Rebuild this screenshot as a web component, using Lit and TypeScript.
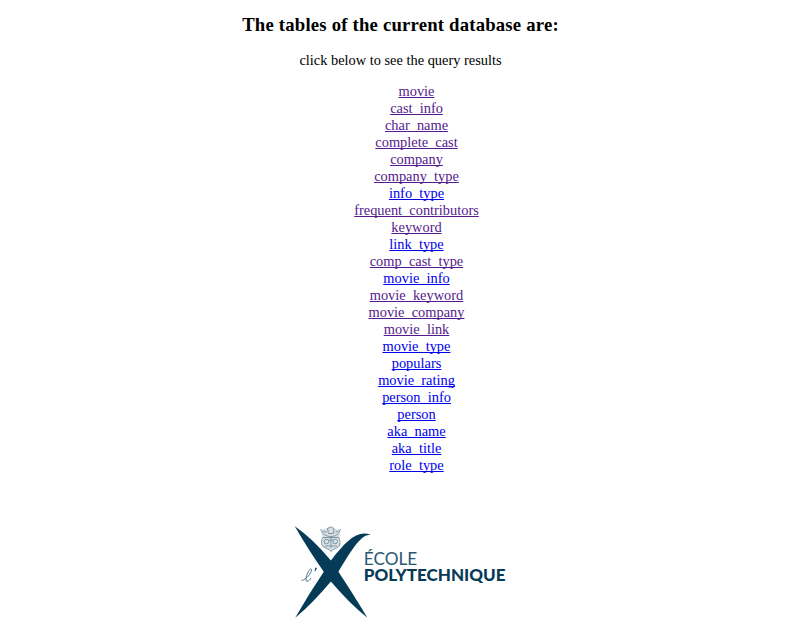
import { LitElement, html, css, svg } from "lit";
import { customElement } from "lit/decorators.js";
import { classMap } from "lit/directives/class-map.js";

interface TableLink {
  name: string;
  visited: boolean;
}

const seen = (name: string): TableLink => ({ name, visited: true });
const fresh = (name: string): TableLink => ({ name, visited: false });

const TABLES: TableLink[] = [
  seen("movie"),
  seen("cast_info"),
  seen("char_name"),
  seen("complete_cast"),
  seen("company"),
  seen("company_type"),
  fresh("info_type"),
  seen("frequent_contributors"),
  seen("keyword"),
  fresh("link_type"),
  seen("comp_cast_type"),
  fresh("movie_info"),
  seen("movie_keyword"),
  seen("movie_company"),
  seen("movie_link"),
  fresh("movie_type"),
  fresh("populars"),
  fresh("movie_rating"),
  fresh("person_info"),
  fresh("person"),
  fresh("aka_name"),
  fresh("aka_title"),
  fresh("role_type"),
];

@customElement("school-logo")
export class SchoolLogo extends LitElement {
  static styles = css`
    :host {
      display: block;
    }
    svg {
      display: block;
    }
    .ink {
      fill: #063b58;
    }
    .line {
      fill: none;
      stroke: #3e6680;
      stroke-width: 0.9;
      stroke-linecap: round;
    }
    .crest {
      fill: none;
      stroke: #47687d;
      stroke-width: 0.9;
      opacity: 0.75;
    }
    .wash {
      fill: #a9bac5;
      opacity: 0.6;
      stroke: none;
    }
    text {
      font-family: Lato, "Liberation Sans", sans-serif;
      fill: #063b58;
    }
    .light {
      font-size: 17.6px;
      font-weight: 400;
      fill: #2c5771;
    }
    .bold {
      font-size: 17.4px;
      font-weight: 900;
    }
  `;

  render() {
    return html`<svg width="220" height="100" viewBox="290 520 220 100" role="img" aria-label="École Polytechnique">
      ${this.cross()} ${this.crest()}
      <path class="line" d="M302 580.5 C307 579 311.5 572.5 311.6 570.2 C311.6 568 309.6 568.8 308.2 571.8 C306.4 575.5 304.9 581.3 307 581.3 C308.5 581.3 309.8 580 310.8 578.3" />
      <path class="ink" d="M315.4 567.6 L317 568 L315.2 571.2 L314.6 571 Z" />
      <text class="light" x="363.8" y="565" textLength="53.5" lengthAdjust="spacingAndGlyphs">ÉCOLE</text>
      <text class="bold" x="363.8" y="581" textLength="141.7" lengthAdjust="spacingAndGlyphs">POLYTECHNIQUE</text>
    </svg>`;
  }

  private cross() {
    return svg`
      <path class="ink" d="M294.8 526.3 Q312.5 538.5 330.9 560.5 L338.4 571.8 Q352.5 593 367.4 617.8 Q350 604 330.9 581.5 L323.8 571.8 Q309 551 294.8 526.3 Z" />
      <path class="ink" d="M371 534.6 C361 535 354 546 338.4 571.8 L330.9 581.5 Q312 604 295.2 617.8 Q309.5 593 323.8 571.8 L330.9 560.5 C346 541.5 356 530 371 534.6 Z" />
    `;
  }

  private crest() {
    return svg`
      <g class="crest">
        <path class="wash" d="M321.5 530 L329 527 L340 530 L339.5 546 L331 551.5 L322 546 Z" />
        <path d="M320.8 529 C322 534 326 536.5 331 536.5 C336 536.5 339 534 340.5 529" />
        <path d="M322.8 531 L326.5 532.3 M338.5 531 L335.5 532.3" />
        <path d="M328.5 533.5 L327.5 528.5 L331 526.8 L334 528.5 L333.5 533.5 Z" />
        <path d="M323 537.5 C321 540 321 545 323.5 547 C326 548.5 329 548.8 331 551.5 C333 548.8 336 548.5 338.5 547 C340.5 545 340.5 540 338.5 537.5 Z" />
        <circle cx="326.5" cy="541.5" r="2.3" />
        <circle cx="335.2" cy="541.5" r="2.3" />
        <path d="M331 537 V548 M325 546 H337 M329 540 H333" />
      </g>
    `;
  }
}

@customElement("app-root")
export class AppRoot extends LitElement {
  static styles = css`
    :host {
      display: flex;
      flex-direction: column;
      align-items: center;
      box-sizing: border-box;
      width: 803px;
      height: 639px;
      padding: 14px 2px 0 0;
      overflow: hidden;
      background: #fff;
      color: #000;
      font: 14.4px/17px "Liberation Serif", serif;
    }
    .title {
      margin: 0;
      font-size: 18.72px;
      line-height: 22px;
      font-weight: bold;
      letter-spacing: 0.2px;
    }
    .hint {
      margin: 16px 0 14px;
    }
    .tables {
      margin: 0;
      padding: 0 0 0 32px;
      list-style: none;
      text-align: center;
    }
    .link {
      color: #0000ee;
      text-decoration: underline;
      text-decoration-skip-ink: none;
      text-decoration-thickness: 1px;
      text-underline-offset: 1px;
    }
    .visited {
      color: #551a8b;
    }
    .logo {
      margin-top: 46px;
      margin-right: 1px;
    }
  `;

  render() {
    return html`
      <h3 class="title">The tables of the current database are:</h3>
      <p class="hint">click below to see the query results</p>
      <ul class="tables">
        ${TABLES.map(
          (t) => html`<li><a class=${classMap({ link: true, visited: t.visited })} href="#${t.name}">${t.name}</a></li>`
        )}
      </ul>
      <school-logo class="logo"></school-logo>
    `;
  }
}
